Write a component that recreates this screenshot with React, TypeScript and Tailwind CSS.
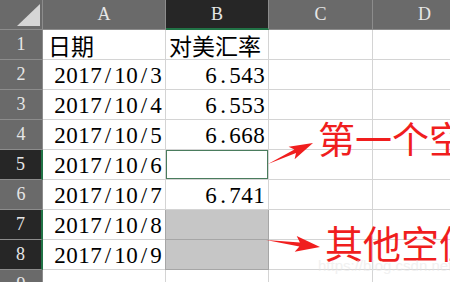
import React from 'react';

// SimSun-like half-width layout: each latin char gets 12px
function Mono({ text }: { text: string }) {
  return (
    <span className="inline-flex font-['Liberation_Serif',serif]">
      {text.split('').map((c, i) => (
        <span key={i} className="inline-block w-[12px] text-center">{c}</span>
      ))}
    </span>
  );
}

const rows: { n: number; a: string; b: string; sel?: boolean }[] = [
  { n: 1, a: '日期', b: '对美汇率' },
  { n: 2, a: '2017/10/3', b: '6.543' },
  { n: 3, a: '2017/10/4', b: '6.553' },
  { n: 4, a: '2017/10/5', b: '6.668' },
  { n: 5, a: '2017/10/6', b: '', sel: true },
  { n: 6, a: '2017/10/7', b: '6.741' },
  { n: 7, a: '2017/10/8', b: '', sel: true },
  { n: 8, a: '2017/10/9', b: '', sel: true },
  { n: 9, a: '', b: '' },
];

export default function App() {
  return (
    <div className="relative w-[450px] h-[282px] overflow-hidden bg-white font-['Liberation_Serif','Noto_Sans_CJK_SC',serif]">
      <div className="grid grid-cols-[43px_123px_103px_104px_104px] grid-rows-[30px_repeat(9,30px)]">
        {/* Column headers */}
        <div className="relative bg-[#6a6a6a] border-r border-b border-[#8c8c8c]">
          <svg className="absolute left-0 top-0" width="43" height="30">
            <polygon points="17,26 40,26 40,4" fill="#d6d6d6" />
          </svg>
        </div>
        <div className="bg-[#6a6a6a] border-r border-b border-[#8c8c8c] flex items-center justify-center font-['Liberation_Serif',serif] text-[18px] text-[#e6e6e6]">A</div>
        <div className="bg-[#262626] border-r border-[#8c8c8c] border-b-2 border-b-[#217346] flex items-center justify-center font-['Liberation_Serif',serif] text-[18px] text-[#e6e6e6]">B</div>
        <div className="bg-[#6a6a6a] border-r border-b border-[#8c8c8c] flex items-center justify-center font-['Liberation_Serif',serif] text-[18px] text-[#e6e6e6]">C</div>
        <div className="bg-[#6a6a6a] border-r border-b border-[#8c8c8c] flex items-center justify-center font-['Liberation_Serif',serif] text-[18px] text-[#e6e6e6]">D</div>

        {rows.map((r) => {
          const isB5 = r.n === 5;
          const grey = r.n === 7 || r.n === 8;
          const isNum = r.n > 1;
          return (
            <React.Fragment key={r.n}>
              <div
                className={`flex items-center justify-center font-['Liberation_Serif',serif] text-[18px] text-[#e6e6e6] border-b border-[#8c8c8c] ${
                  r.sel ? 'bg-[#262626] border-r-2 border-r-[#217346]' : 'bg-[#6a6a6a] border-r border-r-[#8c8c8c]'
                }`}
              >
                {r.n}
              </div>
              <div
                className={`flex items-center border-r border-b border-[#d4d4d4] text-[23px] leading-none text-black pt-[2px] ${
                  isNum ? 'justify-end pr-[3px]' : 'justify-start pl-[5px]'
                }`}
              >
                {isNum ? <Mono text={r.a} /> : <span className="font-['Noto_Sans_CJK_SC',sans-serif]">{r.a}</span>}
              </div>
              <div
                className={`flex items-center border-r border-b text-[23px] leading-none text-black pt-[2px] ${
                  isNum ? 'justify-end pr-[3px]' : 'justify-start pl-[3px]'
                } ${
                  grey
                    ? 'bg-[#c6c6c6] border-[#a6a6a6] border-l border-l-[#a6a6a6] -ml-px'
                    : isB5
                    ? 'border-[#d4d4d4] shadow-[inset_0_0_0_1px_#4a7c5d]'
                    : 'border-[#d4d4d4]'
                }`}
              >
                {isNum ? <Mono text={r.b} /> : <span className="font-['Noto_Sans_CJK_SC',sans-serif]">{r.b}</span>}
              </div>
              <div className="border-r border-b border-[#d4d4d4]" />
              <div className="border-r border-b border-[#d4d4d4]" />
            </React.Fragment>
          );
        })}
      </div>

      {/* Annotations */}
      <svg className="absolute left-0 top-0 pointer-events-none" width="450" height="282">
        <polygon points="268,164 296,153.1 294.6,159.3 313,143 288.6,146.7 294.4,149.5" fill="#f01e1e" />
        <polygon points="266,240 299.4,246.4 294.7,251.8 320,247 296.7,235.9 299.9,242.4" fill="#f01e1e" />
      </svg>
      <div className="absolute left-[318px] top-[120px] whitespace-nowrap font-['Noto_Sans_CJK_SC',sans-serif] text-[37px] leading-none text-[#f01e1e]">
        第一个空
      </div>
      <div className="absolute left-[325px] top-[223px] whitespace-nowrap font-['Noto_Sans_CJK_SC',sans-serif] text-[38px] leading-none text-[#f01e1e]">
        其他空值
      </div>
      <div className="absolute left-[318px] top-[258px] whitespace-nowrap font-['Liberation_Sans',sans-serif] text-[15px] leading-none text-[#e4e4e4] opacity-50">
        https://blog.csdn.net
      </div>
    </div>
  );
}
